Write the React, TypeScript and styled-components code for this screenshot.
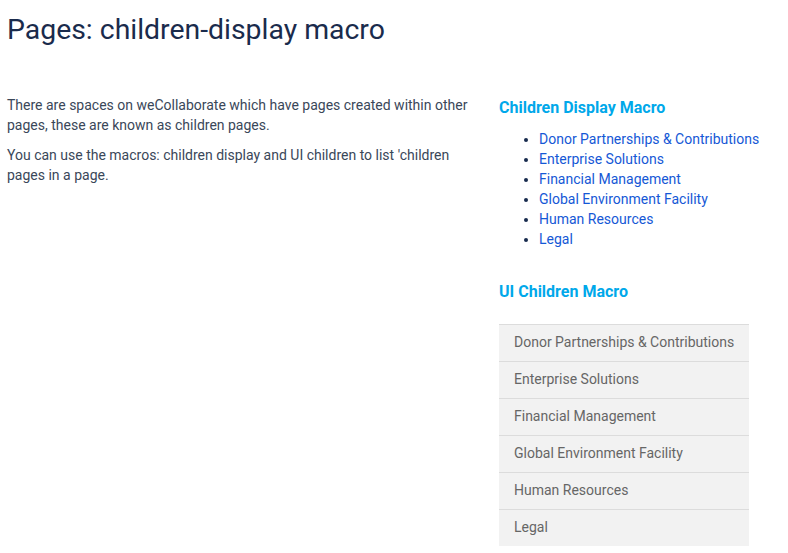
import React from "react";
import styled, { createGlobalStyle } from "styled-components";

const GlobalStyle = createGlobalStyle`
  body {
    margin: 0;
    background: #fff;
    font-family: Roboto, "Liberation Sans", sans-serif;
  }
`;

const Page = styled.div`
  padding: 13px 0 0 7px;
`;

const Title = styled.h1`
  margin: 0;
  font-size: 28.4px;
  line-height: 33px;
  font-weight: 400;
  color: #1a2b4c;
`;

const Columns = styled.div`
  display: grid;
  grid-template-columns: 472px 250px;
  column-gap: 20px;
  margin-top: 49px;
`;

const Paragraph = styled.p`
  margin: 0 0 10px;
  font-size: 14px;
  line-height: 20px;
  color: #3a4759;
`;

const SideHeading = styled.h3<{ $gap: number }>`
  margin: ${(p) => p.$gap}px 0 0;
  font-size: 16px;
  line-height: 20px;
  font-weight: 700;
  color: #00a8ea;
`;

const BulletList = styled.ul`
  margin: 11px 0 0;
  padding-left: 40px;
  list-style: disc;
  color: #172b4d;
  white-space: nowrap;
`;

const BulletItem = styled.li`
  font-size: 14px;
  line-height: 20px;
`;

const Link = styled.a`
  color: #1558d6;
  text-decoration: none;
`;

const MenuBox = styled.div`
  margin-top: 22px;
  display: flex;
  flex-direction: column;
  background: #f2f2f2;
`;

const MenuRow = styled.div`
  border-top: 1px solid #dcdcdc;
  padding: 7px 15px 9px;
  font-size: 14px;
  line-height: 20px;
  color: #666;
  white-space: nowrap;
`;

const children = [
  "Donor Partnerships & Contributions",
  "Enterprise Solutions",
  "Financial Management",
  "Global Environment Facility",
  "Human Resources",
  "Legal",
];

export default function App() {
  return (
    <Page>
      <GlobalStyle />
      <Title>Pages: children-display macro</Title>
      <Columns>
        <div>
          <Paragraph>
            There are spaces on weCollaborate which have pages created within other
            pages, these are known as children pages.
          </Paragraph>
          <Paragraph>
            You can use the macros: children display and UI children to list 'children
            pages in a page.
          </Paragraph>
        </div>
        <div>
          <SideHeading $gap={3}>Children Display Macro</SideHeading>
          <BulletList>
            {children.map((c) => (
              <BulletItem key={c}>
                <Link href="#">{c}</Link>
              </BulletItem>
            ))}
          </BulletList>
          <SideHeading $gap={33}>UI Children Macro</SideHeading>
          <MenuBox>
            {children.map((c) => (
              <MenuRow key={c}>{c}</MenuRow>
            ))}
          </MenuBox>
        </div>
      </Columns>
    </Page>
  );
}
